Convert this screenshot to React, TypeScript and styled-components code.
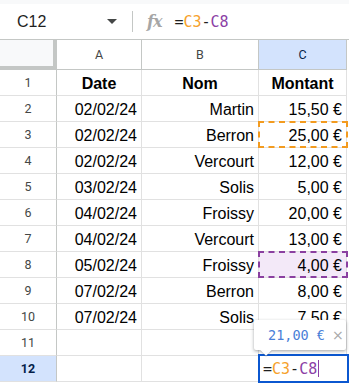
import React from "react";
import styled, { createGlobalStyle, css } from "styled-components";

const GlobalStyle = createGlobalStyle`
  html, body { margin: 0; padding: 0; background: #ffffff; }
  * { box-sizing: border-box; }
`;

const Page = styled.div`
  width: 349px;
  height: 385px;
  overflow: hidden;
  background: #ffffff;
  font-family: "Liberation Sans", Arial, sans-serif;
`;

const FormulaBar = styled.div`
  display: flex;
  align-items: center;
  height: 40px;
  border-top: 4px solid #f8f9fa;
  border-bottom: 1px solid #c4c7c5;
  background: #ffffff;
`;

const NameBox = styled.div`
  display: flex;
  align-items: center;
  justify-content: space-between;
  width: 121px;
  padding: 0 4px 0 17px;
  font-size: 16px;
  color: #1f1f1f;
`;

const Caret = styled.span`
  width: 0;
  height: 0;
  border-left: 5px solid transparent;
  border-right: 5px solid transparent;
  border-top: 5px solid #444746;
`;

const Divider = styled.span`
  width: 1px;
  height: 21px;
  background: #c4c7c5;
  margin: 0 14px 0 11px;
`;

const FxIcon = styled.span`
  font-family: "DejaVu Serif", "Liberation Serif", serif;
  font-style: italic;
  font-weight: 700;
  font-size: 16px;
  color: #a6a6a6;
  letter-spacing: -1px;
  margin-right: 13px;
`;

const Formula = styled.span`
  font-family: "DejaVu Sans Mono", "Liberation Mono", monospace;
  font-size: 15px;
  color: #1f1f1f;
`;

const Ref = styled.span<{ $tone: "orange" | "purple" }>`
  color: ${(p) => (p.$tone === "orange" ? "#f6a12b" : "#8c3fa6")};
`;

const Sheet = styled.div`
  display: grid;
  grid-template-columns: 57px 85px 117px 88px;
  grid-template-rows: 30px;
  grid-auto-rows: 26px;
`;

const Corner = styled.div`
  background: #f8f9fa;
  border-right: 4px solid #c4c7c5;
  border-bottom: 4px solid #c4c7c5;
  box-shadow: 1px 1px 0 #c4c7c5;
`;

const ColHeader = styled.div<{ $active?: boolean }>`
  display: flex;
  align-items: center;
  justify-content: center;
  font-family: Roboto, "Liberation Sans", sans-serif;
  font-size: 12.5px;
  color: ${(p) => (p.$active ? "#041e49" : "#444746")};
  background: ${(p) => (p.$active ? "#d3e3fd" : "#ffffff")};
  border-right: 1px solid #c4c7c5;
  border-bottom: 1px solid #c4c7c5;
`;

const RowHeader = styled.div<{ $active?: boolean }>`
  display: flex;
  align-items: center;
  justify-content: center;
  font-family: Roboto, "Liberation Sans", sans-serif;
  font-size: 12.5px;
  font-weight: ${(p) => (p.$active ? 700 : 400)};
  color: ${(p) => (p.$active ? "#041e49" : "#444746")};
  background: ${(p) => (p.$active ? "#d3e3fd" : "#ffffff")};
  border-right: 1px solid #c4c7c5;
  border-bottom: 1px solid #e1e1e1;
`;

type Mark = "orange" | "purple" | undefined;

const Cell = styled.div<{ $align: "left" | "center" | "right"; $bold?: boolean; $mark?: Mark }>`
  position: relative;
  display: flex;
  align-items: flex-end;
  justify-content: ${(p) =>
    p.$align === "right" ? "flex-end" : p.$align === "center" ? "center" : "flex-start"};
  padding: 0 4px 1px 4px;
  font-size: 16px;
  line-height: 20px;
  font-weight: ${(p) => (p.$bold ? 700 : 400)};
  color: #000000;
  white-space: nowrap;
  border-right: 1px solid #e1e1e1;
  border-bottom: 1px solid #e1e1e1;
  background: ${(p) => (p.$mark === "purple" ? "#f3e9f8" : "#ffffff")};
  ${(p) =>
    p.$mark &&
    css`
      &::after {
        content: "";
        position: absolute;
        top: -1px;
        left: -1px;
        right: -2px;
        bottom: -1px;
        border: 2px dashed ${p.$mark === "orange" ? "#f39b1f" : "#8a3fa0"};
        pointer-events: none;
      }
    `}
`;

const Editor = styled.div`
  position: absolute;
  top: -2px;
  left: -1px;
  right: -3px;
  bottom: -2px;
  z-index: 3;
  display: flex;
  align-items: center;
  padding-left: 3px;
  background: #ffffff;
  border: 2px solid #0b57d0;
  font-family: "DejaVu Sans Mono", "Liberation Mono", monospace;
  font-size: 15px;
  color: #1f1f1f;
`;

const CaretLine = styled.span`
  display: inline-block;
  width: 1px;
  height: 17px;
  margin-left: 1px;
  background: #8c3fa6;
`;

const Tooltip = styled.div`
  position: absolute;
  left: -5px;
  bottom: calc(100% + 6px);
  z-index: 4;
  display: flex;
  align-items: center;
  gap: 7px;
  width: 92px;
  height: 30px;
  padding: 0 0 0 14px;
  background: #ffffff;
  border-radius: 2px;
  box-shadow: 0 1px 3px rgba(60, 64, 67, 0.35), 0 2px 4px rgba(60, 64, 67, 0.15);
  font-family: "DejaVu Sans Mono", "Liberation Mono", monospace;
  font-size: 13.5px;
  color: #4a7fd8;
  &::after {
    content: "";
    position: absolute;
    left: 8px;
    bottom: -4px;
    width: 8px;
    height: 8px;
    background: #ffffff;
    transform: rotate(45deg);
    box-shadow: 1px 1px 1px rgba(60, 64, 67, 0.2);
  }
`;

const Close = styled.span`
  font-family: "DejaVu Sans", sans-serif;
  font-size: 14px;
  color: #a8a8a8;
`;

const rows: [string, string, string][] = [
  ["02/02/24", "Martin", "15,50 €"],
  ["02/02/24", "Berron", "25,00 €"],
  ["02/02/24", "Vercourt", "12,00 €"],
  ["03/02/24", "Solis", "5,00 €"],
  ["04/02/24", "Froissy", "20,00 €"],
  ["04/02/24", "Vercourt", "13,00 €"],
  ["05/02/24", "Froissy", "4,00 €"],
  ["07/02/24", "Berron", "8,00 €"],
  ["07/02/24", "Solis", "7,50 €"],
];

const markFor = (row: number): Mark => (row === 3 ? "orange" : row === 8 ? "purple" : undefined);

export default function App() {
  return (
    <Page>
      <GlobalStyle />
      <FormulaBar>
        <NameBox>
          <span>C12</span>
          <Caret />
        </NameBox>
        <Divider />
        <FxIcon>fx</FxIcon>
        <Formula>
          =<Ref $tone="orange">C3</Ref>-<Ref $tone="purple">C8</Ref>
        </Formula>
      </FormulaBar>
      <Sheet>
        <Corner />
        <ColHeader>A</ColHeader>
        <ColHeader>B</ColHeader>
        <ColHeader $active>C</ColHeader>

        <RowHeader>1</RowHeader>
        <Cell $align="center" $bold>Date</Cell>
        <Cell $align="center" $bold>Nom</Cell>
        <Cell $align="center" $bold>Montant</Cell>

        {rows.map(([d, n, m], i) => {
          const r = i + 2;
          return (
            <React.Fragment key={r}>
              <RowHeader>{r}</RowHeader>
              <Cell $align="right">{d}</Cell>
              <Cell $align="right">{n}</Cell>
              <Cell $align="right" $mark={markFor(r)}>{m}</Cell>
            </React.Fragment>
          );
        })}

        <RowHeader>11</RowHeader>
        <Cell $align="right" />
        <Cell $align="right" />
        <Cell $align="right" />

        <RowHeader $active>12</RowHeader>
        <Cell $align="right" />
        <Cell $align="right" />
        <Cell $align="right">
          <Tooltip>
            <span>21,00 €</span>
            <Close>×</Close>
          </Tooltip>
          <Editor>
            =<Ref $tone="orange">C3</Ref>-<Ref $tone="purple">C8</Ref>
            <CaretLine />
          </Editor>
        </Cell>
      </Sheet>
    </Page>
  );
}
